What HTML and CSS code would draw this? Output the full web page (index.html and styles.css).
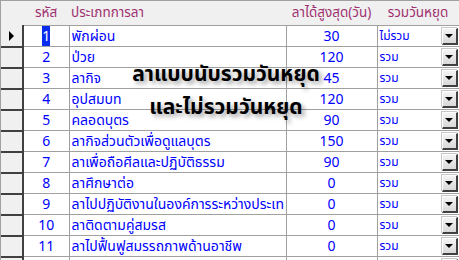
FILE: index.html
```html
<!DOCTYPE html>
<html>
<head>
<meta charset="utf-8">
<link rel="stylesheet" href="styles.css">
</head>
<body>
<div class="sheet">
  <table class="grid">
    <colgroup>
      <col class="c-sel"><col class="c-id"><col class="c-name"><col class="c-days"><col class="c-combo">
    </colgroup>
    <thead>
      <tr>
        <th class="sel-h"></th>
        <th class="h-center">รหัส</th>
        <th class="h-left">ประเภทการลา</th>
        <th class="h-center">ลาได้สูงสุด(วัน)</th>
        <th class="h-center">รวมวันหยุด</th>
      </tr>
    </thead>
    <tbody>
      <tr><td class="sel"><span class="arrow"></span></td><td class="num"><span class="hl">1</span></td><td class="txt">พักผ่อน</td><td class="num">30</td><td class="combo"><div class="cb"><span>ไม่รวม</span><i class="btn"></i></div></td></tr>
      <tr><td class="sel"></td><td class="num">2</td><td class="txt">ป่วย</td><td class="num">120</td><td class="combo"><div class="cb"><span>รวม</span><i class="btn"></i></div></td></tr>
      <tr><td class="sel"></td><td class="num">3</td><td class="txt">ลากิจ</td><td class="num">45</td><td class="combo"><div class="cb"><span>รวม</span><i class="btn"></i></div></td></tr>
      <tr><td class="sel"></td><td class="num">4</td><td class="txt">อุปสมบท</td><td class="num">120</td><td class="combo"><div class="cb"><span>รวม</span><i class="btn"></i></div></td></tr>
      <tr><td class="sel"></td><td class="num">5</td><td class="txt">คลอดบุตร</td><td class="num">90</td><td class="combo"><div class="cb"><span>รวม</span><i class="btn"></i></div></td></tr>
      <tr><td class="sel"></td><td class="num">6</td><td class="txt">ลากิจส่วนตัวเพื่อดูแลบุตร</td><td class="num">150</td><td class="combo"><div class="cb"><span>รวม</span><i class="btn"></i></div></td></tr>
      <tr><td class="sel"></td><td class="num">7</td><td class="txt">ลาเพื่อถือศีลและปฏิบัติธรรม</td><td class="num">90</td><td class="combo"><div class="cb"><span>รวม</span><i class="btn"></i></div></td></tr>
      <tr><td class="sel"></td><td class="num">8</td><td class="txt">ลาศึกษาต่อ</td><td class="num">0</td><td class="combo"><div class="cb"><span>รวม</span><i class="btn"></i></div></td></tr>
      <tr><td class="sel"></td><td class="num">9</td><td class="txt"><div class="clip">ลาไปปฏิบัติงานในองค์การระหว่างประเทศ</div></td><td class="num">0</td><td class="combo"><div class="cb"><span>รวม</span><i class="btn"></i></div></td></tr>
      <tr><td class="sel"></td><td class="num">10</td><td class="txt">ลาติดตามคู่สมรส</td><td class="num">0</td><td class="combo"><div class="cb"><span>รวม</span><i class="btn"></i></div></td></tr>
      <tr><td class="sel"></td><td class="num">11</td><td class="txt">ลาไปฟื้นฟูสมรรถภาพด้านอาชีพ</td><td class="num">0</td><td class="combo"><div class="cb"><span>รวม</span><i class="btn"></i></div></td></tr>
      <tr><td class="sel"></td><td class="num"></td><td class="txt"></td><td class="num"></td><td class="combo"><div class="cb"><span></span><i class="btn"></i></div></td></tr>
    </tbody>
  </table>
  <div class="overlay">
    <div class="ov1">ลาแบบนับรวมวันหยุด</div>
    <div class="ov2">และไม่รวมวันหยุด</div>
  </div>
</div>
</body>
</html>
```

FILE: styles.css
```css
html, body {
  margin: 0;
  padding: 0;
  background: #ffffff;
  overflow: hidden;
}
body {
  width: 459px;
  height: 260px;
  font-family: Tahoma, "Noto Sans Thai", "Noto Sans", "DejaVu Sans", sans-serif;
  font-size: 14px;
}
.sheet {
  position: relative;
  width: 459px;
  height: 260px;
  overflow: hidden;
  background: #f0f0f0;
  border-top: 1px solid #a0a0a0;
  border-left: 1px solid #a0a0a0;
  box-sizing: border-box;
}
.grid {
  border-collapse: collapse;
  table-layout: fixed;
  width: 458px;
}
.c-sel { width: 22px; }
.c-id { width: 46px; }
.c-name { width: 217px; }
.c-days { width: 91px; }
.c-combo { width: 82px; }
th {
  height: 24px;
  padding: 0 2px;
  font-weight: normal;
  font-size: 13.5px;
  line-height: 18px;
  color: #a03070;
  background: #f0f0f0;
  white-space: nowrap;
  overflow: hidden;
  border: none;
  vertical-align: middle;
}
.h-center { text-align: center; }
.h-left { text-align: left; }
tbody tr { height: 21px; }
td {
  height: 19px;
  line-height: 17px;
  padding: 0 2px;
  border: 1px solid #a0a0a0;
  background: #ffffff;
  color: #0000ff;
  white-space: nowrap;
  overflow: hidden;
  vertical-align: middle;
}
td.sel {
  background: #f0f0f0;
  border: none;
  border-right: 2px solid #404040;
  border-bottom: 2px solid #404040;
  padding: 0;
}
.arrow {
  display: block;
  margin-left: 8px;
  width: 0;
  height: 0;
  border-top: 5px solid transparent;
  border-bottom: 5px solid transparent;
  border-left: 5px solid #000;
}
.num { text-align: center; }
.txt { text-align: left; }
.clip { overflow: hidden; width: 212px; }
.hl {
  background: #0a2cf0;
  color: #ffffff;
  padding: 1px 0;
}
td.combo { padding: 0 0 0 2px; }
.cb {
  display: flex;
  align-items: center;
  justify-content: space-between;
  height: 18px;
}
.cb span { font-size: 12px; line-height: 16px; }
.btn {
  display: flex;
  align-items: center;
  justify-content: center;
  width: 13px;
  height: 14px;
  margin-right: 1px;
  background: linear-gradient(#f4f4f4, #d8d8d8);
  border-top: 1px solid #ffffff;
  border-left: 1px solid #ffffff;
  border-right: 2px solid #404040;
  border-bottom: 2px solid #404040;
  box-shadow: -1px -1px 0 #c8c8c8;
}
.btn::after {
  content: "";
  width: 0;
  height: 0;
  border-left: 4px solid transparent;
  border-right: 4px solid transparent;
  border-top: 4px solid #000;
}
.overlay {
  position: absolute;
  left: 120px;
  top: 57px;
  width: 210px;
  text-align: center;
  font-weight: bold;
  font-size: 21px;
  color: #000;
  text-shadow: 3px 3px 4px rgba(0,0,0,0.35);
  line-height: 33px;
}
```
